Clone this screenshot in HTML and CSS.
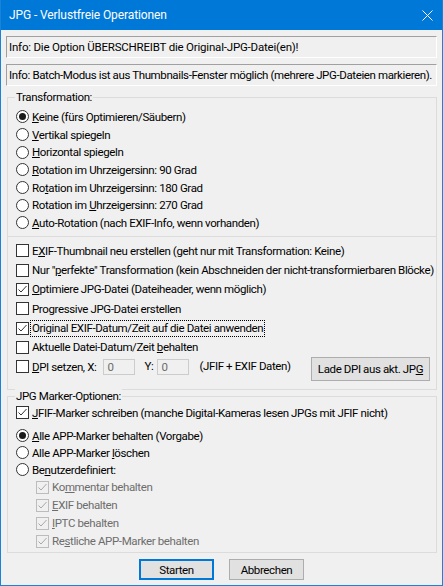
FILE: index.html
```html
<!DOCTYPE html>
<html lang="de">
<head>
    <meta charset="UTF-8">
    <meta name="viewport" content="width=device-width, initial-scale=1.0">
    <title>JPG - Verlustfreie Operationen</title>
    <link rel="stylesheet" href="styles.css">
</head>
<body>
<div class="window">
    <div class="titlebar">
        <span class="title">JPG - Verlustfreie Operationen</span>
        <svg class="close" width="11" height="11" viewBox="0 0 11 11">
            <path d="M0.5 0.5 L10.5 10.5 M10.5 0.5 L0.5 10.5" stroke="#fff" stroke-width="1" fill="none"/>
        </svg>
    </div>
    <div class="client">
        <div class="info info-warn">Info: Die Option ÜBERSCHREIBT die Original-JPG-Datei(en)!</div>
        <div class="info">Info: Batch-Modus ist aus Thumbnails-Fenster möglich (mehrere JPG-Dateien markieren).</div>

        <div class="group group-main">
            <span class="legend">Transformation:</span>
            <div class="radios">
                <div class="opt"><span class="radio on"></span><span class="label"><u>K</u>eine (fürs Optimieren/Säubern)</span></div>
                <div class="opt"><span class="radio"></span><span class="label"><u>V</u>ertikal spiegeln</span></div>
                <div class="opt"><span class="radio"></span><span class="label"><u>H</u>orizontal spiegeln</span></div>
                <div class="opt"><span class="radio"></span><span class="label"><u>R</u>otation im Uhrzeigersinn: 90 Grad</span></div>
                <div class="opt"><span class="radio"></span><span class="label">Ro<u>t</u>ation im Uhrzeigersinn: 180 Grad</span></div>
                <div class="opt"><span class="radio"></span><span class="label">Rotation im <u>U</u>hrzeigersinn: 270 Grad</span></div>
                <div class="opt"><span class="radio"></span><span class="label"><u>A</u>uto-Rotation (nach EXIF-Info, wenn vorhanden)</span></div>
            </div>
            <div class="checks">
                <div class="opt"><span class="check"></span><span class="label">E<u>X</u>IF-Thumbnail neu erstellen (geht nur mit Transformation: Keine)</span></div>
                <div class="opt"><span class="check"></span><span class="label">Nur "<u>p</u>erfekte" Transformation (kein Abschneiden der nicht-transformierbaren Blöcke)</span></div>
                <div class="opt"><span class="check"><svg width="11" height="11" viewBox="0 0 11 11"><polyline points="1.5,5.5 4,8 9.5,2" fill="none" stroke="#333" stroke-width="1"/></svg></span><span class="label"><u>O</u>ptimiere JPG-Datei (Dateiheader, wenn möglich)</span></div>
                <div class="opt"><span class="check"></span><span class="label">Progressive JPG-Datei erstellen</span></div>
                <div class="opt"><span class="check"><svg width="11" height="11" viewBox="0 0 11 11"><polyline points="1.5,5.5 4,8 9.5,2" fill="none" stroke="#333" stroke-width="1"/></svg></span><span class="label focus">Ori<u>g</u>inal EXIF-Datum/Zeit auf die Datei anwenden</span></div>
                <div class="opt"><span class="check"></span><span class="label">Aktuelle Datei-Datum/Zeit <u>b</u>ehalten</span></div>
                <div class="dpi-row">
                    <div class="opt"><span class="check"></span><span class="label"><u>D</u>PI setzen, X:</span></div>
                    <span class="field">0</span>
                    <span class="dpi-y">Y:</span>
                    <span class="field">0</span>
                    <span class="dpi-note">(JFIF + EXIF Daten)</span>
                    <span class="button dpi-button">Lade DPI aus akt. JP<u>G</u></span>
                </div>
            </div>
        </div>

        <div class="group group-marker">
            <span class="legend">JPG Marker-Optionen:</span>
            <div class="opt jfif"><span class="check"><svg width="11" height="11" viewBox="0 0 11 11"><polyline points="1.5,5.5 4,8 9.5,2" fill="none" stroke="#333" stroke-width="1"/></svg></span><span class="label"><u>J</u>FIF-Marker schreiben (manche Digital-Kameras lesen JPGs mit JFIF nicht)</span></div>
            <div class="marker-radios">
                <div class="opt"><span class="radio on"></span><span class="label"><u>A</u>lle APP-Marker behalten (Vorgabe)</span></div>
                <div class="opt"><span class="radio"></span><span class="label">Alle APP-Marker <u>l</u>öschen</span></div>
                <div class="opt"><span class="radio"></span><span class="label">Be<u>n</u>utzerdefiniert:</span></div>
            </div>
            <div class="sub-checks">
                <div class="opt off"><span class="check off"><svg width="11" height="11" viewBox="0 0 11 11"><polyline points="1.5,5.5 4,8 9.5,2" fill="none" stroke="#a8a8a8" stroke-width="1"/></svg></span><span class="label">Ko<u>m</u>mentar behalten</span></div>
                <div class="opt off"><span class="check off"><svg width="11" height="11" viewBox="0 0 11 11"><polyline points="1.5,5.5 4,8 9.5,2" fill="none" stroke="#a8a8a8" stroke-width="1"/></svg></span><span class="label"><u>E</u>XIF behalten</span></div>
                <div class="opt off"><span class="check off"><svg width="11" height="11" viewBox="0 0 11 11"><polyline points="1.5,5.5 4,8 9.5,2" fill="none" stroke="#a8a8a8" stroke-width="1"/></svg></span><span class="label"><u>I</u>PTC behalten</span></div>
                <div class="opt off"><span class="check off"><svg width="11" height="11" viewBox="0 0 11 11"><polyline points="1.5,5.5 4,8 9.5,2" fill="none" stroke="#a8a8a8" stroke-width="1"/></svg></span><span class="label">Re<u>s</u>tliche APP-Marker behalten</span></div>
            </div>
        </div>

        <div class="buttons">
            <span class="button default">Starten</span>
            <span class="button">Abbrechen</span>
        </div>
    </div>
</div>
</body>
</html>
```

FILE: styles.css
```css
body {
    margin: 0;
    padding: 0;
    background-color: #f0f0f0;
    font-family: Roboto, "Liberation Sans", sans-serif;
    font-size: 11.5px;
    letter-spacing: -0.38px;
    color: #000;
}
.window {
    width: 443px;
    height: 586px;
    box-sizing: border-box;
    border: 1px solid #1883d7;
    border-top: none;
    background-color: #f0f0f0;
    display: flex;
    flex-direction: column;
    overflow: hidden;
}
.titlebar {
    height: 30px;
    background-color: #0078d7;
    color: #fff;
    display: flex;
    align-items: center;
    justify-content: space-between;
    padding: 0 9px 0 8px;
    flex-shrink: 0;
}
.title {
    font-size: 12px;
    letter-spacing: -0.1px;
}
.close {
    margin-top: 1px;
}
.client {
    padding: 6px 5px 0 5px;
    display: flex;
    flex-direction: column;
    white-space: nowrap;
}
.info {
    height: 22px;
    box-sizing: border-box;
    border-top: 1px solid #a0a0a0;
    border-left: 1px solid #a0a0a0;
    border-right: 1px solid #fff;
    border-bottom: 1px solid #fff;
    padding-left: 2px;
    line-height: 20px;
    margin-bottom: 6px;
}
.info-warn {
    letter-spacing: -0.2px;
}
.group {
    position: relative;
    border: 1px solid #dcdcdc;
    margin-left: 1px;
}
.group-main {
    margin-top: 5px;
}
.group-marker {
    margin-top: 6px;
    padding: 7px 0 2px 0;
}
.legend {
    position: absolute;
    top: -8px;
    left: 7px;
    padding: 0 1px;
    line-height: 15px;
    background-color: #f0f0f0;
}
.radios {
    padding: 10px 0 4px 8px;
    border-bottom: 1px solid #dcdcdc;
}
.radios .opt {
    height: 17.7px;
}
.checks {
    padding: 4.3px 0 7.7px 8px;
}
.checks .opt {
    height: 19.33px;
}
.opt {
    display: flex;
    align-items: center;
}
.off {
    color: #6d6d6d;
}
.label {
    margin-left: 3px;
}
.label.focus {
    margin-left: 1px;
    padding: 0 1px 0 1px;
    border: 1px dotted #000;
    line-height: 15px;
}
.radio {
    width: 13px;
    height: 13px;
    box-sizing: border-box;
    border: 1px solid #333;
    border-radius: 50%;
    background-color: #fff;
    display: flex;
    align-items: center;
    justify-content: center;
    flex-shrink: 0;
}
.radio.on::after {
    content: "";
    width: 7px;
    height: 7px;
    border-radius: 50%;
    background-color: #1a1a1a;
}
.check {
    width: 13px;
    height: 13px;
    box-sizing: border-box;
    border: 1px solid #333;
    background-color: #fff;
    flex-shrink: 0;
    display: flex;
}
.check.off {
    border-color: #bcbcbc;
    background-color: #f0f0f0;
}
.dpi-row {
    display: flex;
    align-items: flex-start;
    height: 24px;
}
.dpi-row .opt {
    height: 19.33px;
}
.field {
    width: 32px;
    height: 16px;
    box-sizing: border-box;
    margin: 2px 0 0 7px;
    border: 1px solid #cccccc;
    background-color: #f0f0f0;
    color: #6d6d6d;
    padding-left: 3px;
    line-height: 14px;
}
.dpi-y {
    margin-left: 9px;
    line-height: 19.33px;
}
.dpi-row .dpi-y + .field {
    margin-left: 4px;
}
.dpi-note {
    margin-left: 10px;
    line-height: 19.33px;
}
.button {
    box-sizing: border-box;
    border: 1px solid #adadad;
    background-color: #e1e1e1;
    display: flex;
    align-items: center;
    justify-content: center;
}
.dpi-button {
    margin-left: auto;
    margin-right: 6px;
    width: 119px;
    height: 24px;
}
.jfif {
    height: 18px;
    padding-left: 8px;
}
.marker-radios {
    margin-top: 5.5px;
    padding-left: 8px;
}
.marker-radios .opt {
    height: 17px;
}
.sub-checks {
    padding-left: 28px;
}
.sub-checks .opt {
    height: 18px;
}
.buttons {
    display: flex;
    justify-content: center;
    gap: 15px;
    margin-top: 6px;
}
.buttons .button {
    width: 75px;
    height: 21px;
}
.button.default {
    border: 2px solid #0078d7;
}
```
